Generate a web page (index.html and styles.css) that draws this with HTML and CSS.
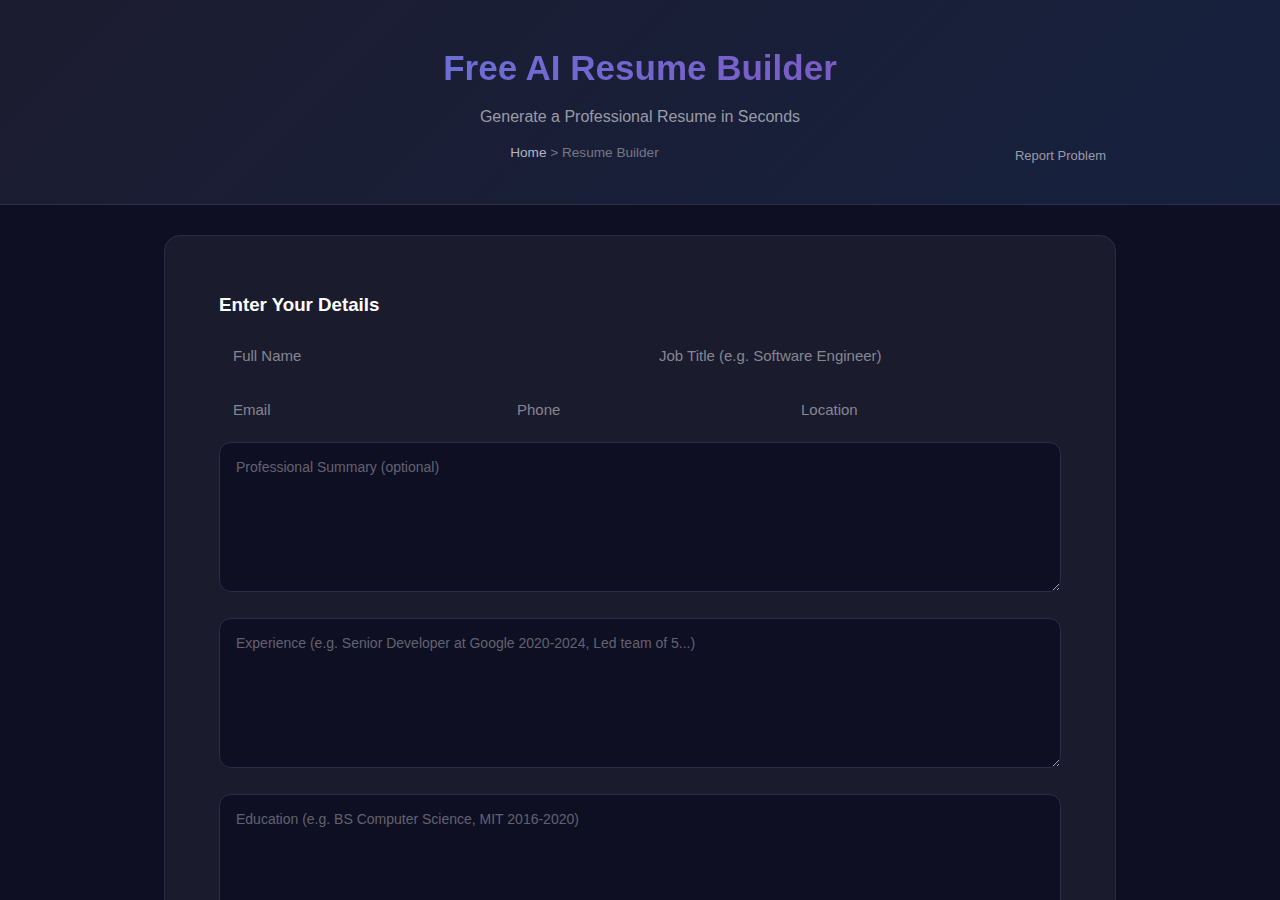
FILE: index.html
```html
<!DOCTYPE html>
<html lang="en">
<head>
    <meta charset="UTF-8">
    <meta name="viewport" content="width=device-width, initial-scale=1.0">
    <title>Free AI Resume Builder</title>
    <link rel="stylesheet" href="styles.css">
</head>
<body>
    <header class="hero">
        <div class="hero-inner">
            <h1 class="hero-title">Free AI Resume Builder</h1>
            <p class="hero-sub">Generate a Professional Resume in Seconds</p>
            <div class="hero-bar">
                <nav class="crumbs"><a href="#" class="crumb-home">Home</a> &gt; Resume Builder</nav>
                <a href="#" class="report-link">Report Problem</a>
            </div>
        </div>
    </header>

    <main class="builder">
        <section class="card">
            <h3 class="card-title">Enter Your Details</h3>
            <div class="row two">
                <input type="text" class="field" placeholder="Full Name">
                <input type="text" class="field" placeholder="Job Title (e.g. Software Engineer)">
            </div>
            <div class="row three">
                <input type="text" class="field" placeholder="Email">
                <input type="text" class="field" placeholder="Phone">
                <input type="text" class="field" placeholder="Location">
            </div>
            <textarea class="area" placeholder="Professional Summary (optional)"></textarea>
            <textarea class="area" placeholder="Experience (e.g. Senior Developer at Google 2020-2024, Led team of 5...)"></textarea>
            <textarea class="area" placeholder="Education (e.g. BS Computer Science, MIT 2016-2020)"></textarea>
        </section>
    </main>
</body>
</html>
```

FILE: styles.css
```css
body {
    margin: 0;
    background-color: #0f0f23;
    font-family: "Liberation Sans", Arial, sans-serif;
    color: #e0e0e8;
}
a {
    text-decoration: none;
}
.hero {
    background: linear-gradient(135deg, #1c1c30 0%, #16213e 100%);
    border-bottom: 1px solid #2a2e4c;
    height: 204px;
}
.hero-inner {
    max-width: 952px;
    margin: 0 auto;
    padding-top: 46px;
    text-align: center;
}
.hero-title {
    display: inline-block;
    margin: 0;
    font-size: 35px;
    line-height: 44px;
    font-weight: bold;
    background: linear-gradient(90deg, #6b6fd4, #7c5cc6);
    -webkit-background-clip: text;
    background-clip: text;
    color: transparent;
}
.hero-sub {
    margin: 17px 0 0;
    font-size: 16px;
    line-height: 20px;
    color: #9b9ba8;
}
.hero-bar {
    display: flex;
    align-items: flex-start;
    margin-top: 18px;
}
.crumbs {
    flex: 1;
    font-size: 0.85rem;
    line-height: 16px;
    color: #777786;
}
.crumb-home {
    color: #b4b4c0;
}
.report-link {
    padding: 3px 10px 0;
    font-size: 13px;
    line-height: 16px;
    color: #9b9ba8;
}
.builder {
    padding-top: 30px;
}
.card {
    box-sizing: border-box;
    width: 952px;
    margin: 0 auto;
    padding: 54px 54px 40px;
    background-color: #1b1b2e;
    border: 1px solid #2a2b46;
    border-radius: 16px;
}
.card-title {
    margin: 3px 0 16px;
    font-size: 1.17em;
    line-height: 24px;
    color: #ffffff;
}
.row {
    display: grid;
    gap: 10px;
    margin-bottom: 10px;
}
.row.two {
    grid-template-columns: 1fr 1fr;
}
.row.three {
    grid-template-columns: 1fr 1fr 1fr;
    margin-bottom: 11px;
}
.field {
    box-sizing: border-box;
    height: 44px;
    padding: 0 14px;
    background: transparent;
    border: none;
    outline: none;
    font-family: inherit;
    font-size: 15px;
    color: #e0e0e8;
}
.field::placeholder {
    color: #868690;
}
.area {
    display: block;
    box-sizing: border-box;
    width: 100%;
    height: 150px;
    margin: 0 0 26px;
    padding: 16px;
    background-color: #0f0f24;
    border: 1px solid #2b2b4e;
    border-radius: 12px;
    font-family: inherit;
    font-size: 14px;
    line-height: 16px;
    color: #e0e0e8;
}
.area::placeholder {
    color: #62626f;
}
```
